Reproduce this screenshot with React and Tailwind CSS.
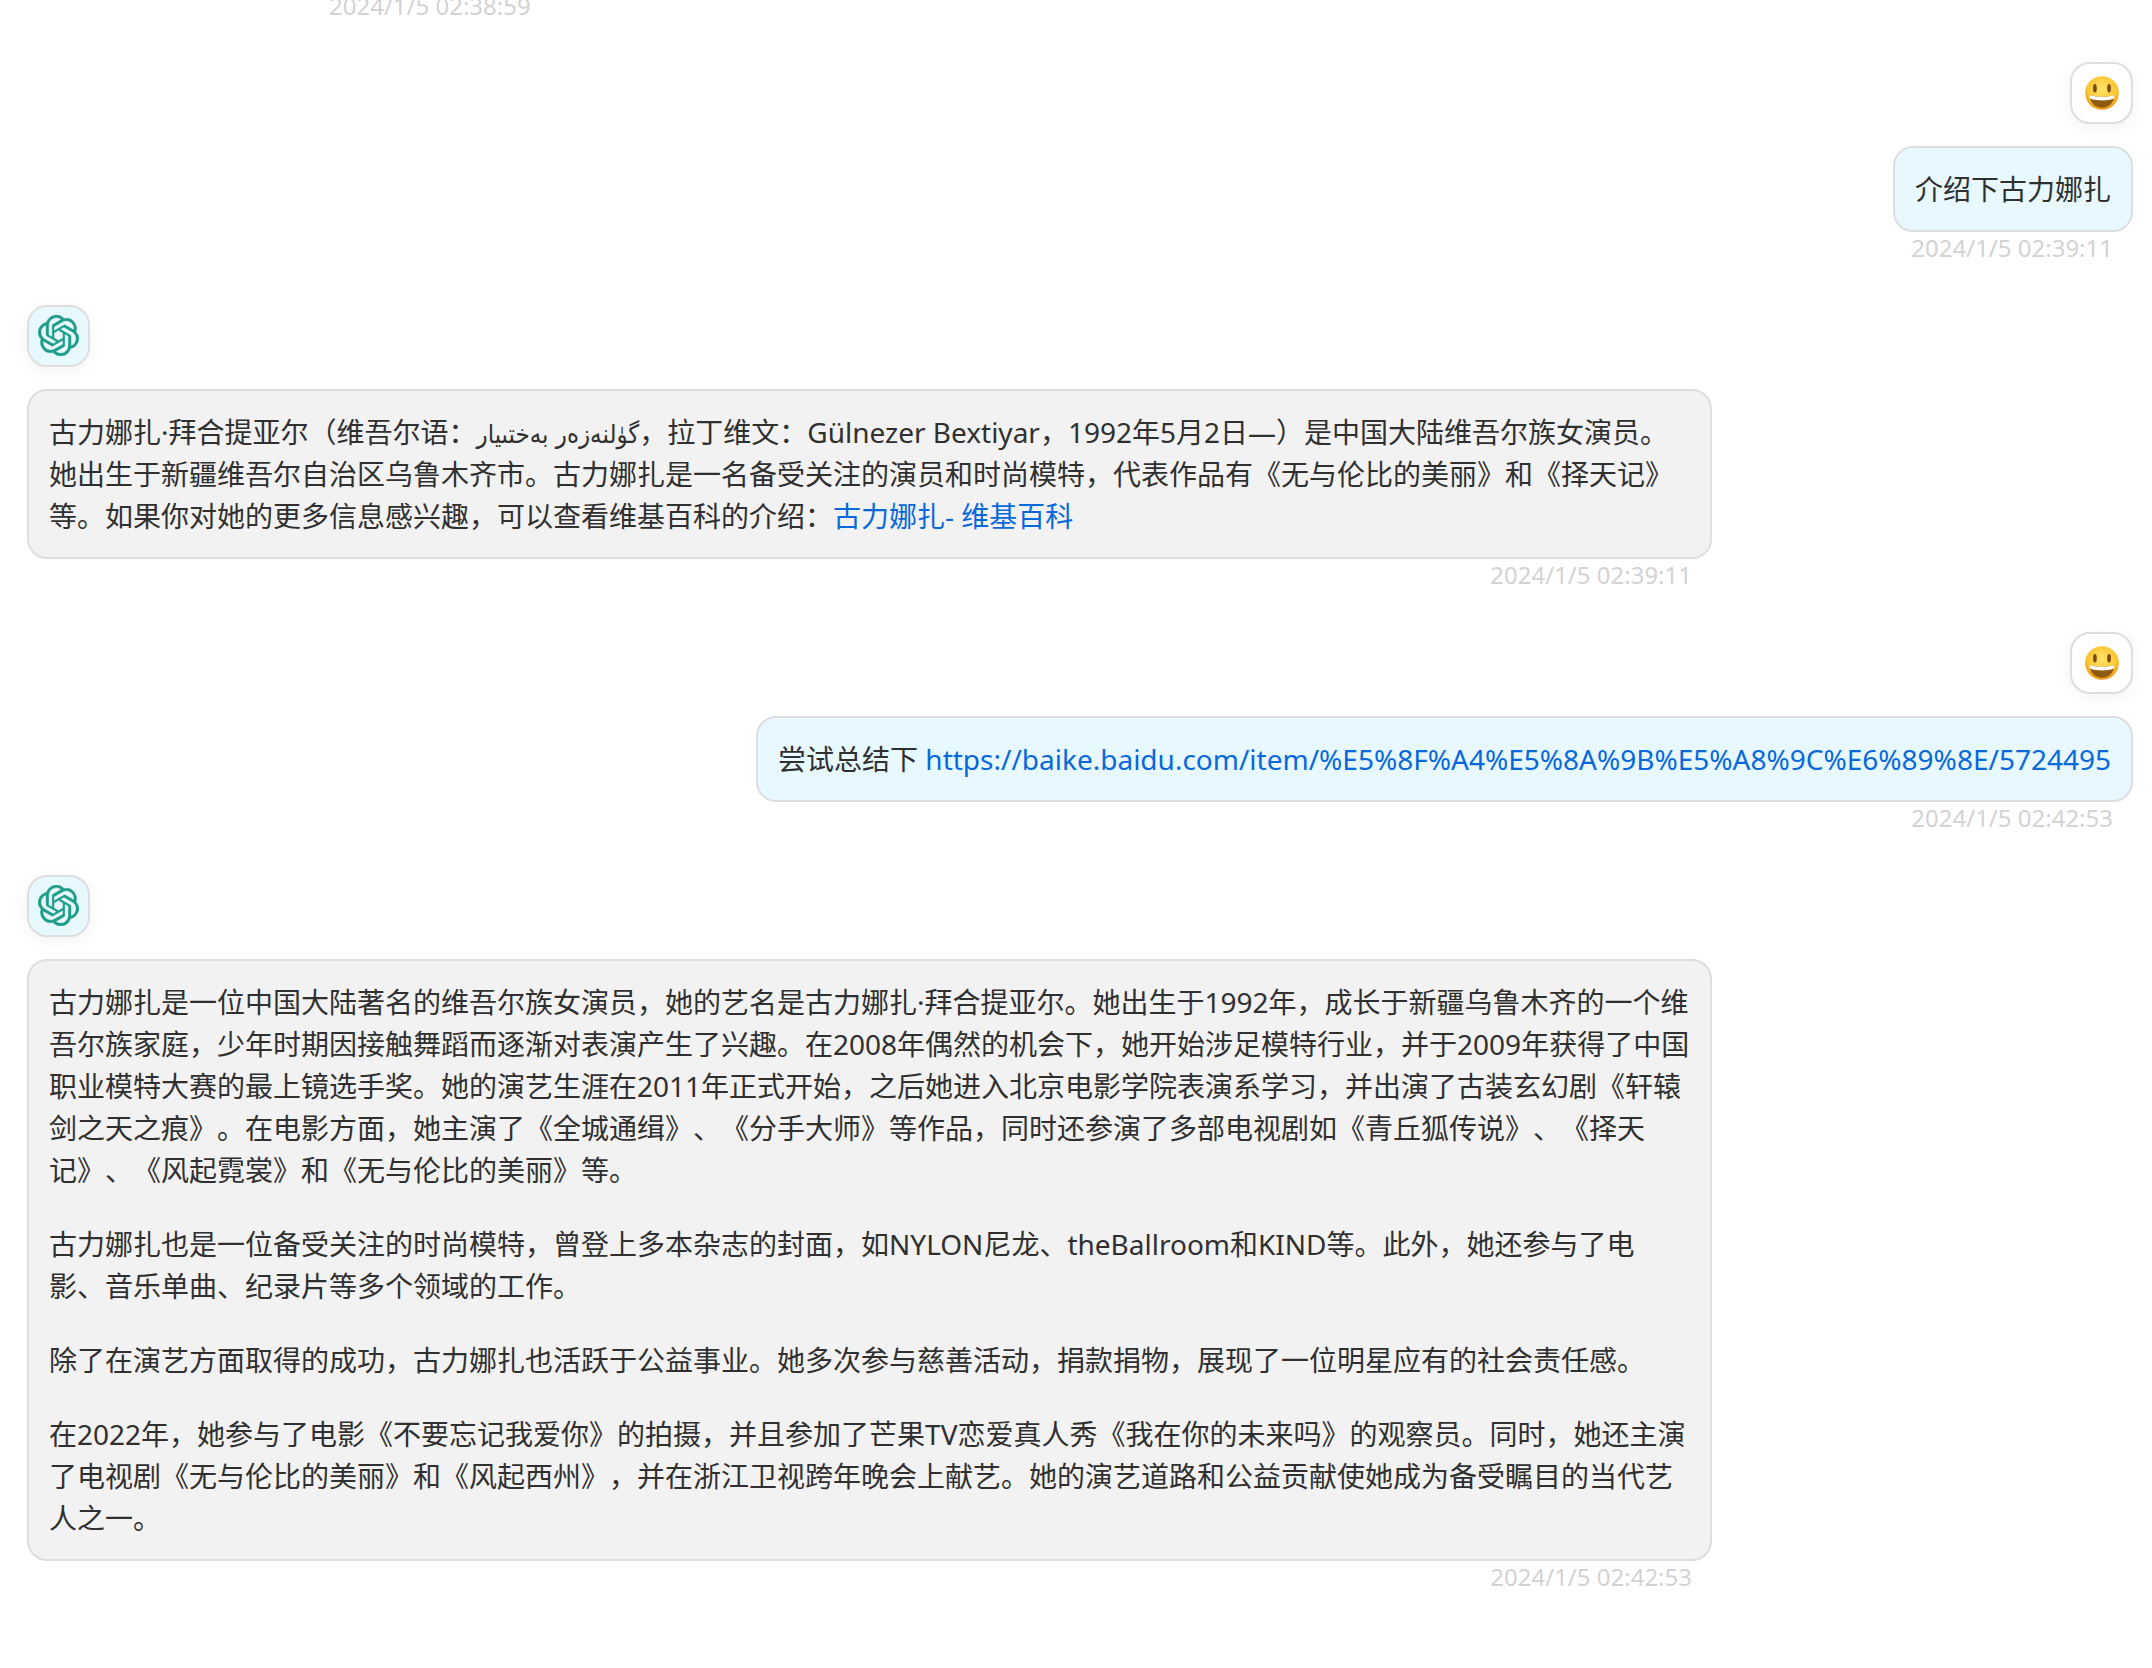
const fontStack = "font-['Noto_Sans','Noto_Sans_CJK_SC','DejaVu_Sans',sans-serif] [text-spacing-trim:space-all]";

function BotIcon() {
  return (
    <svg viewBox="0 0 24 24" className="w-[41px] h-[41px]" fill="#1f9c8b" stroke="#1f9c8b" strokeWidth="0.2">
      <path d="M22.2819 9.8211a5.9847 5.9847 0 0 0-.5157-4.9108 6.0462 6.0462 0 0 0-6.5098-2.9A6.0651 6.0651 0 0 0 4.9807 4.1818a5.9847 5.9847 0 0 0-3.9977 2.9 6.0462 6.0462 0 0 0 .7427 7.0966 5.98 5.98 0 0 0 .511 4.9107 6.051 6.051 0 0 0 6.5146 2.9001A5.9847 5.9847 0 0 0 13.2599 24a6.0557 6.0557 0 0 0 5.7718-4.2058 5.9894 5.9894 0 0 0 3.9977-2.9001 6.0557 6.0557 0 0 0-.7475-7.0729zm-9.022 12.6081a4.4755 4.4755 0 0 1-2.8764-1.0408l.1419-.0804 4.7783-2.7582a.7948.7948 0 0 0 .3927-.6813v-6.7369l2.02 1.1686a.071.071 0 0 1 .038.052v5.5826a4.504 4.504 0 0 1-4.4945 4.4944zm-9.6607-4.1254a4.4708 4.4708 0 0 1-.5346-3.0137l.142.0852 4.783 2.7582a.7712.7712 0 0 0 .7806 0l5.8428-3.3685v2.3324a.0804.0804 0 0 1-.0332.0615L9.74 19.9502a4.4992 4.4992 0 0 1-6.1408-1.6464zM2.3408 7.8956a4.485 4.485 0 0 1 2.3655-1.9728V11.6a.7664.7664 0 0 0 .3879.6765l5.8144 3.3543-2.0201 1.1685a.0757.0757 0 0 1-.071 0l-4.8303-2.7865A4.504 4.504 0 0 1 2.3408 7.872zm16.5963 3.8558L13.1038 8.364 15.1192 7.2a.0757.0757 0 0 1 .071 0l4.8303 2.7913a4.4944 4.4944 0 0 1-.6765 8.1042v-5.6772a.79.79 0 0 0-.407-.667zm2.0107-3.0231l-.142-.0852-4.7735-2.7818a.7759.7759 0 0 0-.7854 0L9.409 9.2297V6.8974a.0662.0662 0 0 1 .0284-.0615l4.8303-2.7866a4.4992 4.4992 0 0 1 6.6802 4.66zM8.3065 12.863l-2.02-1.1638a.0804.0804 0 0 1-.038-.0567V6.0742a4.4992 4.4992 0 0 1 7.3757-3.4537l-.142.0805L8.704 5.459a.7948.7948 0 0 0-.3927.6813zm1.0976-2.3654l2.602-1.4998 2.6069 1.4998v2.9994l-2.5974 1.4997-2.6067-1.4997Z" />
    </svg>
  );
}

function SmileyIcon() {
  return (
    <svg viewBox="0 0 36 36" className="w-[34px] h-[34px]">
      <defs>
        <radialGradient id="smileFace" cx="50%" cy="38%" r="62%">
          <stop offset="0%" stopColor="#ffe36a" />
          <stop offset="70%" stopColor="#fbc530" />
          <stop offset="100%" stopColor="#ee9512" />
        </radialGradient>
      </defs>
      <circle cx="18" cy="18" r="17.8" fill="url(#smileFace)" />
      <ellipse cx="10.500" cy="13" rx="2" ry="4.500" fill="#7a4a10" />
      <ellipse cx="25.500" cy="13" rx="2" ry="4.500" fill="#7a4a10" />
      <path d="M5 20c4 1.400 8.700 2 13 2s9-.6 13-2c0 8-5.500 13.500-13 13.500S5 28 5 20z" fill="#8f5a12" />
      <path d="M5 20c4 1.400 8.700 2 13 2s9-.6 13-2c.1 1.300 0 2.500-.3 3.800-4 1.500-8.300 2.100-12.700 2.100s-8.700-.6-12.700-2.100c-.3-1.300-.4-2.500-.3-3.800z" fill="#fff" />
    </svg>
  );
}

function Avatar({ bot }) {
  return (
    <div className={`w-[63px] h-[62.5px] rounded-[20px] border-2 border-[#dedede] flex items-center justify-center shadow-[0_4px_16px_rgba(0,0,0,0.05)] ${bot ? 'bg-[#e7f8ff]' : 'bg-white'}`}>
      {bot ? <BotIcon /> : <SmileyIcon />}
    </div>
  );
}

function Message({ bot, date, children }) {
  return (
    <div className={`flex flex-col mb-[43px] ${bot ? 'items-start' : 'items-end'}`}>
      <div className="mb-[21.5px]">
        <Avatar bot={bot} />
      </div>
      <div className={`flex flex-col items-end ${bot ? 'w-[1685px]' : ''}`}>
        <div className={`rounded-[20px] border-2 border-[#dedede] p-[20px] text-[28px] leading-[42px] text-[#303030] ${bot ? 'bg-[#f2f2f2] w-full' : 'bg-[#e7f8ff]'}`}>
          {children}
        </div>
        <div className="text-[24px] leading-[36px] text-[#d3d3d3] pr-[20px] mt-[-2px] h-[32px]">{date}</div>
      </div>
    </div>
  );
}

const Link = ({ children }) => <a className="text-[#0969da]">{children}</a>;

export default function App() {
  return (
    <div className={`h-[1668px] overflow-hidden bg-white pl-[27px] pr-[19px] ${fontStack}`}>
      <div className="mt-[-12px] mb-[37.5px] pl-[302px] text-[24px] leading-[36px] text-[#d3d3d3]">2024/1/5 02:38:59</div>

      <Message date="2024/1/5 02:39:11">介绍下古力娜扎</Message>

      <Message bot date="2024/1/5 02:39:11">
        古力娜扎·拜合提亚尔（维吾尔语：<span className="font-['DejaVu_Sans'] text-[25.6px] leading-[0] [font-stretch:condensed]">گۈلنەزەر بەختىيار</span>，拉丁维文：Gülnezer Bextiyar，1992年5月2日—）是中国大陆维吾尔族女演员。她出生于新疆维吾尔自治区乌鲁木齐市。古力娜扎是一名备受关注的演员和时尚模特，代表作品有《无与伦比的美丽》和《择天记》等。如果你对她的更多信息感兴趣，可以查看维基百科的介绍：<Link>古力娜扎- 维基百科</Link>
      </Message>

      <Message date="2024/1/5 02:42:53">
        尝试总结下 <Link>https://baike.baidu.com/item/%E5%8F%A4%E5%8A%9B%E5%A8%9C%E6%89%8E/5724495</Link>
      </Message>

      <Message bot date="2024/1/5 02:42:53">
        <p className="mb-[32px]">古力娜扎是一位中国大陆著名的维吾尔族女演员，她的艺名是古力娜扎·拜合提亚尔。她出生于1992年，成长于新疆乌鲁木齐的一个维吾尔族家庭，少年时期因接触舞蹈而逐渐对表演产生了兴趣。在2008年偶然的机会下，她开始涉足模特行业，并于2009年获得了中国职业模特大赛的最上镜选手奖。她的演艺生涯在2011年正式开始，之后她进入北京电影学院表演系学习，并出演了古装玄幻剧《轩辕剑之天之痕》。在电影方面，她主演了《全城通缉》、《分手大师》等作品，同时还参演了多部电视剧如《青丘狐传说》、《择天记》、《风起霓裳》和《无与伦比的美丽》等。</p>
        <p className="mb-[32px]">古力娜扎也是一位备受关注的时尚模特，曾登上多本杂志的封面，如NYLON尼龙、theBallroom和KIND等。此外，她还参与了电影、音乐单曲、纪录片等多个领域的工作。</p>
        <p className="mb-[32px]">除了在演艺方面取得的成功，古力娜扎也活跃于公益事业。她多次参与慈善活动，捐款捐物，展现了一位明星应有的社会责任感。</p>
        <p>在2022年，她参与了电影《不要忘记我爱你》的拍摄，并且参加了芒果TV恋爱真人秀《我在你的未来吗》的观察员。同时，她还主演了电视剧《无与伦比的美丽》和《风起西州》，并在浙江卫视跨年晚会上献艺。她的演艺道路和公益贡献使她成为备受瞩目的当代艺人之一。</p>
      </Message>
    </div>
  );
}
